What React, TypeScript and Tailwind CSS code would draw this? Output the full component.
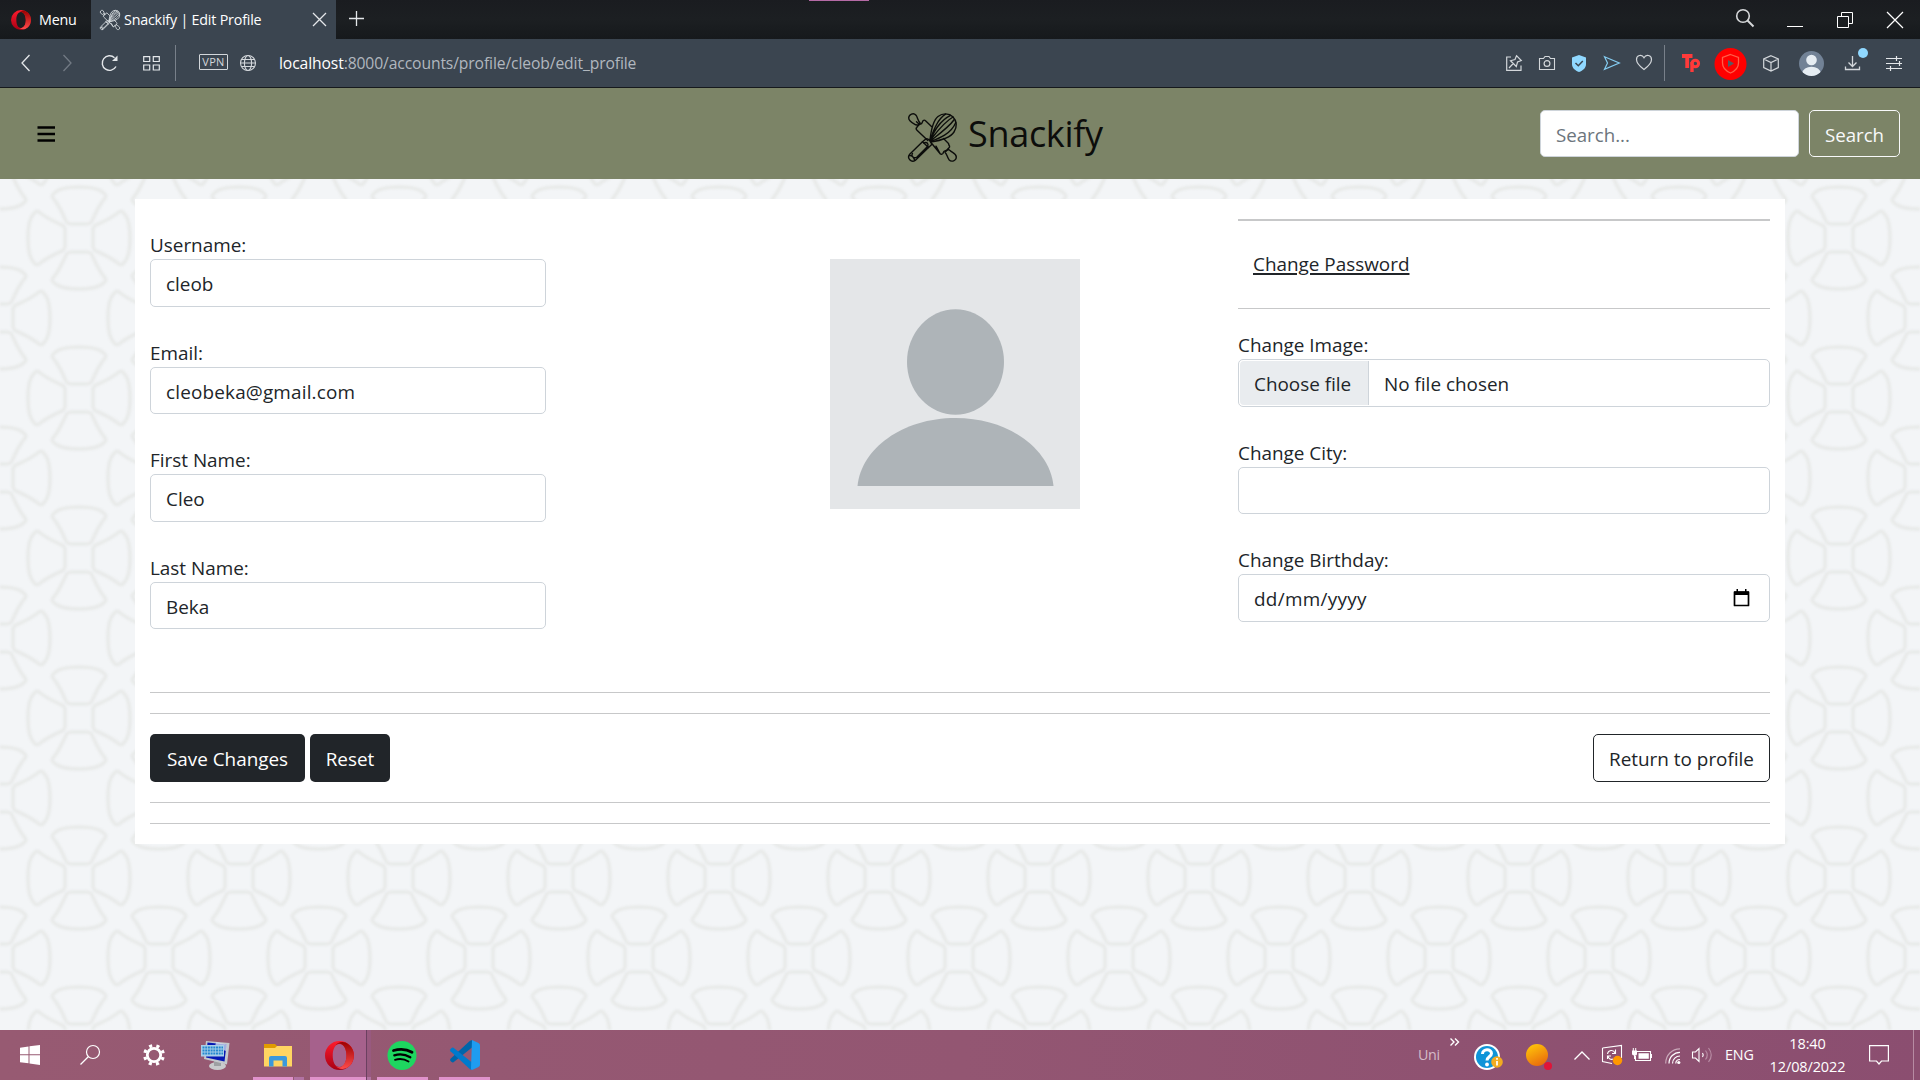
import React from 'react';

const F = 'font-["Open_Sans","Noto_Sans",sans-serif]';

function Icon({ w, h, vb, cls = '', children }: { w: number; h: number; vb?: string; cls?: string; children: React.ReactNode }) {
  return (
    <svg width={w} height={h} viewBox={vb ?? `0 0 ${w} ${h}`} fill="none" className={`shrink-0 overflow-visible ${cls}`}>
      {children}
    </svg>
  );
}

function Utensils({ size, color, sw, cls = '' }: { size: number; color: string; sw: number; cls?: string }) {
  return (
    <Icon w={size} h={size} vb="0 0 49 49" cls={cls}>
      <g stroke={color} strokeWidth={sw} strokeLinejoin="round" strokeLinecap="round">
        <path d="M11.500 11.500 L8.500 8.700 M7.800 11.800 C4.500 10 0.500 8.500 0.700 4.800 C0.900 1.300 5.500 -0.800 8 2.200 C9.800 4.800 9.800 7.500 12 9.800 L10.200 12.200 Z" />
        <path d="M23.500 13.500 L17.500 7.700 C16.800 7 15.600 7.200 15 7.800 L13.700 10.500 L11 11.500 L8.700 14.500 C8 15.200 8.200 16.400 9 17.200 L19.800 27.500" />
        <path d="M28 33.200 L32.200 40.800 C33 41.500 34.200 41.300 34.800 40.600 L36 38.300 L38.800 37.200 L41 34.700 C41.800 34 41.700 32.900 41 32.200 L40.500 30.500 L35.500 25.500 M24 30.800 L32.200 40.800" />
        <path d="M37 39.200 C39.200 41.500 39 44 41 46.700 C43.500 49.500 48.500 47.800 48.300 43.900 C48.200 40.500 44.500 39.800 42 37.500 L40 36.200 Z" />
        <path d="M22 27 C23 18 25 7.500 30 3.500 C34.500 0 41 0 44.800 3.700 C49 7.700 49.300 14 46 19 C42.500 24.500 33 27.500 22.500 29" />
        <path d="M22 27 C25.500 20 31 8 42.500 2.300 M22 27.500 C28 20 36 9 45 4 M22.300 28 C30 22 41 14 46.300 6.500 M22.500 28.500 C31 25.500 43 21 47.800 9.500 M22 27 C26 16 30 6 37.500 1.200" />
        <path d="M17.500 26.200 C19.500 24.500 24 28.500 23.500 31.800 L20.500 34.500 L14.500 28.800 Z" />
        <path d="M14.500 28.800 L1.700 41.200 C-1.500 45 3.200 50 7.200 47.500 L20.500 34.500 M16 30 C19 28.500 21 31 19.500 33.500 L9 44 C6 46 2.500 43 4.500 40.600 M2 42.500 C4 42.500 6.500 45 6.500 47.500" />
      </g>
    </Icon>
  );
}

function OperaO({ w, h, id }: { w: number; h: number; id: string }) {
  return (
    <Icon w={w} h={h} vb="0 0 30 30">
      <defs>
        <linearGradient id={id + 'a'} x1="0" y1="0" x2="0" y2="1">
          <stop offset="0" stopColor="#ff1b2d" />
          <stop offset="1" stopColor="#a70014" />
        </linearGradient>
        <linearGradient id={id + 'b'} x1="0" y1="0" x2="0" y2="1">
          <stop offset="0" stopColor="#9c0000" />
          <stop offset="1" stopColor="#ff4b4b" />
        </linearGradient>
      </defs>
      <path fillRule="evenodd" d="M15 0a15 15 0 1 0 0 30a15 15 0 1 0 0-30zM15 3C20 3 22.200 9 22.200 15S20 27 15 27S8 21 8 15S10 3 15 3z" fill={`url(#${id}a)`} />
      <path d="M11 4.500C13 2.500 15 2.500 16.500 3.200C20.500 5 22.200 10 22.200 15S20.500 25 16.500 26.800C15 27.500 13 27.500 11 25.500C13 28.500 19 31 25 26.200C31.500 21 31.500 9 25 3.800C19-1 13 1.500 11 4.500z" fill={`url(#${id}b)`} />
    </Icon>
  );
}

function Flower({ x, y }: { x: number; y: number }) {
  const petal =
    'M-12.500 16 Q-11 14 -8 14 H8 Q11 14 12.500 16 C16 24 20 33 26 40 Q28 43 24.500 45 C17 53 -17 53 -24.500 45 Q-28 43 -26 40 C-20 33 -16 24 -12.500 16 Z';
  return (
    <g transform={`translate(${x} ${y})`}>
      <path d={petal} />
      <path d={petal} transform="rotate(90)" />
      <path d={petal} transform="rotate(180)" />
      <path d={petal} transform="rotate(270)" />
    </g>
  );
}

function Wallpaper() {
  return (
    <svg className="absolute inset-0 h-full w-full bg-[#f3f5f7]" aria-hidden="true">
      <defs>
        <pattern id="tiles" x="-1" y="70" width="160" height="160" patternUnits="userSpaceOnUse">
          <g stroke="#e8eae9" strokeWidth="3.600" fill="none" strokeLinejoin="round">
            <Flower x={80} y={80} />
            <Flower x={0} y={0} />
            <Flower x={160} y={0} />
            <Flower x={0} y={160} />
            <Flower x={160} y={160} />
          </g>
        </pattern>
      </defs>
      <rect width="100%" height="100%" fill="url(#tiles)" className="blur-[1.2px]" />
    </svg>
  );
}

function TabStrip() {
  return (
    <div className="flex h-[39px] items-center bg-linear-to-b from-[#1a1c20] via-[#1c1f22] to-[#16191c] text-[14.300px] text-white">
      <div className="flex h-full w-[91px] items-center pl-[11px]">
        <OperaO w={20} h={20} id="om" />
        <span className="ml-2 pt-px tracking-[-0.200px]">Menu</span>
      </div>
      <div className="flex h-full w-[245px] items-center bg-[#3b4550] pl-[9px]">
        <Utensils size={20} color="#d5dade" sw={2.2} />
        <span className="ml-1 w-[190px] whitespace-nowrap tracking-[-0.200px]">Snackify | Edit Profile</span>
        <Icon w={13} h={13} cls="mr-[10px]">
          <path d="M0 0L13 13M13 0L0 13" stroke="#e4e7ea" strokeWidth="1.300" />
        </Icon>
      </div>
      <Icon w={15} h={15} cls="ml-[13px] mb-[2px]">
        <path d="M7.500 0V15M0 7.500H15" stroke="#e4e7ea" strokeWidth="1.300" />
      </Icon>
      <div className="h-px w-[60px] self-start bg-[#b56aa5] ml-[445px]" />
      <Icon w={18} h={18} cls="ml-auto mb-[3px]">
        <circle cx="7" cy="7" r="6.300" stroke="#d6d8da" strokeWidth="1.600" />
        <path d="M11.500 11.500L17.500 17.500" stroke="#d6d8da" strokeWidth="1.900" />
      </Icon>
      <Icon w={16} h={16} cls="ml-[33px]">
        <path d="M0 14.500H16" stroke="#fff" strokeWidth="1" />
      </Icon>
      <Icon w={16} h={16} cls="ml-[34px]">
        <path d="M0.500 4.500H11.500V15.500H0.500ZM4.500 4.500V0.500H15.500V11.500H11.500" stroke="#fff" />
      </Icon>
      <Icon w={16} h={16} cls="ml-[34px] mr-[17px]">
        <path d="M0 0L16 16M16 0L0 16" stroke="#fff" strokeWidth="1.200" />
      </Icon>
    </div>
  );
}

function AddressBar() {
  const g = '#d3d7db';
  return (
    <div className="flex h-[49px] items-center border-b border-[#16191c] bg-[#3b4550]">
      <Icon w={9} h={16} cls="ml-[21px]">
        <path d="M8.500 0L1 8L8.500 16" stroke="#e4e7ea" strokeWidth="1.300" />
      </Icon>
      <Icon w={9} h={16} cls="ml-[33px]">
        <path d="M0.500 0L8 8L0.500 16" stroke="#727a84" strokeWidth="1.300" />
      </Icon>
      <Icon w={17} h={16} cls="ml-[29px]">
        <path d="M15 11.500A7.300 7.300 0 1 1 13.500 2.700" stroke="#e4e7ea" strokeWidth="1.400" />
        <path d="M16.500 0.500V6H11Z" fill="#e4e7ea" />
      </Icon>
      <Icon w={17} h={15} cls="ml-[25px]">
        <path d="M0.700 0.700H6.700V5.500H0.700ZM10.300 0.700H16.300V5.500H10.300ZM0.700 9H6.700V14H0.700ZM10.300 9H16.300V14H10.300Z" stroke="#e4e7ea" strokeWidth="1.200" />
      </Icon>
      <div className="ml-[15px] h-9 w-px bg-[#78808a]" />
      <div className="ml-[23px] mb-[2px] flex h-[16px] w-[29px] items-center justify-center rounded-[1px] border border-[#d3d7db] text-[11px] tracking-[0.300px] text-[#d3d7db]">VPN</div>
      <Icon w={16} h={16} cls="ml-[12px] mb-px">
        <g stroke={g} strokeWidth="1.100">
          <circle cx="8" cy="8" r="7.500" />
          <ellipse cx="8" cy="8" rx="3.600" ry="7.500" />
          <path d="M0.500 8H15.500M1.500 4.500H14.500M1.500 11.500H14.500" />
        </g>
      </Icon>
      <div className="ml-[23px] whitespace-nowrap pt-[2px] text-[15.700px] tracking-[-0.120px] text-[#b1b7bf]">
        <span className="text-white">localhost</span>:8000/accounts/profile/cleob/edit_profile
      </div>

      <Icon w={16} h={16} cls="ml-auto mb-px">
        <path d="M5 2H0.700V15.300H15V10.500" stroke={g} strokeWidth="1.200" />
        <path d="M10.500 0.700L15.300 5.500L11.500 7L10.300 11.500L4.500 5.700L9 4.500ZM7.300 8.500L3 13" stroke={g} strokeWidth="1.200" />
      </Icon>
      <Icon w={16} h={14} cls="ml-[17px]">
        <path d="M0.500 2.500H4.500L6 0.500H10L11.500 2.500H15.500V13.500H0.500Z" stroke={g} strokeWidth="1.100" />
        <circle cx="8" cy="7.500" r="2.900" stroke={g} strokeWidth="1.200" />
      </Icon>
      <Icon w={14} h={17} cls="ml-[17px]">
        <path d="M7 0L14 2.500V9C14 13 11 15.500 7 17C3 15.500 0 13 0 9V2.500Z" fill="#90d8ff" />
        <path d="M3.500 8L6.300 10.700L10.800 6" stroke="#3b4550" strokeWidth="1.500" />
      </Icon>
      <Icon w={16} h={14} cls="ml-[18px]">
        <path d="M0.500 0.700L15.300 7L0.500 13.300L3.500 7Z" stroke="#85cdf2" strokeWidth="1.200" />
      </Icon>
      <Icon w={16} h={15} cls="ml-[16px] mb-[2px]">
        <path d="M8 14.500C4 11.500 0.500 8.500 0.500 4.500C0.500 0 6-1 8 2.800C10-1 15.500 0 15.500 4.500C15.500 8.500 12 11.500 8 14.500Z" stroke={g} strokeWidth="1.200" />
      </Icon>
      <div className="ml-[12px] h-9 w-px bg-[#78808a]" />
      <Icon w={18} h={18} cls="ml-[17px]">
        <path d="M0 2H10.500M5.200 2V14" stroke="#ff3a3a" strokeWidth="3.800" />
        <circle cx="13.300" cy="9.500" r="3.300" stroke="#ff3a3a" strokeWidth="3" />
        <path d="M10 8V18" stroke="#ff3a3a" strokeWidth="3.400" />
      </Icon>
      <Icon w={33} h={33} cls="ml-[14px]">
        <circle cx="16.500" cy="17" r="16" fill="#ff0000" />
        <path d="M16.500 7.500L24.500 10.500V16C24.500 21 21 24 16.500 26C12 24 8.500 21 8.500 16V10.500Z" stroke="#ff5e48" strokeWidth="1.300" />
        <path d="M14 13V20L20 16.500Z" fill="#555c66" />
      </Icon>
      <Icon w={16} h={17} cls="ml-[16px]">
        <path d="M8 0.700L15.300 4V12.500L8 16L0.700 12.500V4ZM0.700 4L8 7.500L15.300 4M8 7.500V16" stroke={g} strokeWidth="1.200" />
      </Icon>
      <Icon w={25} h={25} cls="ml-[20px]">
        <clipPath id="ava"><circle cx="12.500" cy="12.500" r="12.500" /></clipPath>
        <circle cx="12.500" cy="12.500" r="12.500" fill="#728296" />
        <g clipPath="url(#ava)" fill="#e6edf3">
          <circle cx="12.500" cy="9" r="5.300" />
          <ellipse cx="12.500" cy="22" rx="9" ry="6.200" />
        </g>
      </Icon>
      <Icon w={15} h={15} cls="ml-[21px]">
        <path d="M7.500 0V10.500M3.500 6.500L7.500 10.500L11.500 6.500M0.500 10.500V13.500H14.500V10.500" stroke={g} strokeWidth="1.300" />
        <circle cx="18" cy="-3" r="5" fill="#90d8ff" />
      </Icon>
      <Icon w={16} h={15} cls="ml-[26px] mr-[18px]">
        <path d="M0 2.500H16M0 7.500H16M0 12.500H16M10.500 0V5M13.500 5V10M4.500 10V15" stroke="#e4e7ea" strokeWidth="1.200" />
      </Icon>
    </div>
  );
}

function Header() {
  return (
    <header className="relative flex h-[91px] items-center bg-[#7c8467] pr-5">
      <Icon w={18} h={16} cls="ml-[37px]">
        <path d="M0.500 1.500H18M0.500 8H18M0.500 14.500H18" stroke="#000" strokeWidth="2.600" />
      </Icon>
      <div className="ml-[853px] flex items-center">
        <Utensils size={49} color="#0c0d0b" sw={1.400} cls="mt-[7px]" />
        <span className="ml-[11px] mt-[1px] text-[36px] leading-[46px] tracking-[-0.300px] text-[#0c0d0b]">Snackify</span>
      </div>
      <div className="ml-auto flex gap-[10px]">
        <div className="h-[47px] w-[259px] rounded-[5px] border border-[#ced4da] bg-white pt-[10px] pl-[15px] text-[18.700px] leading-[28px] text-[#6c757d]">Search...</div>
        <div className="flex h-[47px] w-[91px] justify-center rounded-[5px] border border-[#f8f9fa] pt-[10px] text-[18.700px] leading-[28px] text-[#f8f9fa]">Search</div>
      </div>
    </header>
  );
}

const box = 'flex h-[47.600px] rounded-[5px] border border-[#ced4da] bg-white';
const val = 'pl-[15px] pt-[9px]';

function Field({ label, children }: { label: string; children?: React.ReactNode }) {
  return (
    <div className="h-[107.500px]">
      <div className="h-[30px] pt-[1px]">{label}</div>
      <div className={box}>{children}</div>
    </div>
  );
}

function Profile() {
  return (
    <main className="relative mx-[135px] mt-5 h-[645px] bg-white px-[15px] text-[18.900px] leading-[30px] text-[#212529]">
      <div className="flex h-[493px]">
        <div className="w-[396px] pt-[30px]">
          <Field label="Username:"><span className={val}>cleob</span></Field>
          <Field label="Email:"><span className={`${val} tracking-[0.180px]`}>cleobeka@gmail.com</span></Field>
          <Field label="First Name:"><span className={val}>Cleo</span></Field>
          <Field label="Last Name:"><span className={val}>Beka</span></Field>
        </div>
        <div className="ml-[284px] mt-[60px] h-[250px] w-[250px]">
          <Icon w={250} h={250}>
            <rect width="250" height="250" fill="#e4e6e8" />
            <ellipse cx="125.500" cy="103" rx="48.500" ry="52.800" fill="#aeb4b8" />
            <path d="M27.500 227C31 190 72 159 125.500 159S220 190 223.500 227Z" fill="#aeb4b8" />
          </Icon>
        </div>
        <div className="ml-auto w-[532px] pt-5">
          <div className="h-[2px] bg-[#c7c8c9]" />
          <div className="h-[87px] pt-[28px] pl-[15px]">
            <span className="underline decoration-[1.500px] underline-offset-[2px]">Change Password</span>
          </div>
          <div className="mb-5 h-px bg-[#c7c8c9]" />
          <Field label="Change Image:">
            <span className="m-px w-[129px] rounded-l-[4px] border-r border-[#ced4da] bg-[#e9ecef] pl-[14px] pt-[8px]">Choose file</span>
            <span className="pl-[14px] pt-[9px]">No file chosen</span>
          </Field>
          <Field label="Change City:" />
          <Field label="Change Birthday:">
            <span className={`${val} tracking-[0.300px]`}>dd/mm/yyyy</span>
            <Icon w={17} h={18} cls="ml-auto mr-[19px] mt-[14px]">
              <path d="M1.500 3H15.500V16.500H1.500Z" stroke="#000" strokeWidth="1.700" strokeLinejoin="round" />
              <path d="M1 2.500H16V6H1ZM3.500 0H5V3H3.500ZM12 0H13.500V3H12Z" fill="#000" />
            </Icon>
          </Field>
        </div>
      </div>
      <div className="h-px bg-[#c7c8c9]" />
      <div className="mt-5 h-px bg-[#c7c8c9]" />
      <div className="mt-5 flex h-[48px]">
        <div className="w-[155px] rounded-[5px] bg-[#212529] pt-[9.500px] text-center text-white">Save Changes</div>
        <div className="ml-[5px] w-[80px] rounded-[5px] bg-[#212529] pt-[9.500px] text-center text-white">Reset</div>
        <div className="ml-auto w-[177px] rounded-[5px] border border-[#212529] pt-[8.500px] text-center">Return to profile</div>
      </div>
      <div className="mt-5 h-px bg-[#c7c8c9]" />
      <div className="mt-5 h-px bg-[#c7c8c9]" />
    </main>
  );
}

function Taskbar() {
  const slot = 'flex h-full shrink-0 items-center justify-center';
  return (
    <footer className="flex h-[50px] bg-linear-to-r from-[#975a72] via-[#935672] to-[#8b4e70] text-white">
      <div className={`${slot} w-[60px]`}>
        <Icon w={20} h={20}>
          <path d="M0 2.700L8.500 1.500V9.300H0ZM9.500 1.300L20 0V9.300H9.500ZM0 10.300H8.500V18.300L0 17.200ZM9.500 10.300H20V20L9.500 18.500Z" fill="#fff" />
        </Icon>
      </div>
      <div className={`${slot} w-[60px]`}>
        <Icon w={20} h={20}>
          <circle cx="13" cy="7" r="6.500" stroke="#fff" strokeWidth="1.200" />
          <path d="M8.500 11.500L0.500 19.500" stroke="#fff" strokeWidth="1.300" />
        </Icon>
      </div>
      <div className={`${slot} w-[67px]`}>
        <Icon w={22} h={22}>
          <circle cx="11" cy="11" r="6.700" stroke="#fff" strokeWidth="2.800" />
          <circle cx="11" cy="11" r="9.300" stroke="#fff" strokeWidth="3.200" strokeDasharray="3.100 4.204" strokeDashoffset="-2.100" />
        </Icon>
      </div>
      <div className={`${slot} w-[57px]`}>
        <Icon w={29} h={29}>
          <ellipse cx="16.500" cy="25" rx="8.500" ry="4" fill="#c9cbcd" />
          <path d="M13 19H20V25H13Z" fill="#9da0a3" />
          <path d="M5 0L28.500 2L26 23.500L3 18Z" fill="#c4c8cc" />
          <path d="M6.500 1.500L25.500 3.500L23.500 20.500L5 16.500Z" fill="#0618b4" />
          <path d="M15 1L26 3.500L25 10L14 6Z" fill="#d7dfef" opacity="0.750" />
          <path d="M0 4H23V15.500H0Z" fill="#a9cfe8" />
          <path d="M1.500 6.500H22M1.500 9.500H22M1.500 12.500H22" stroke="#2588cf" strokeWidth="2" strokeDasharray="2 0.700" />
        </Icon>
      </div>
      <div className={`${slot} relative ml-[4px] w-[60px]`}>
        <Icon w={28} h={23}>
          <path d="M0 0H11L13 2V5H0Z" fill="#e09b00" />
          <path d="M0 4H11L13 2H28V22.500H0Z" fill="#ffd562" />
          <path d="M5 22.500V14Q5 12 7 12H21Q23 12 23 14V22.500H18.500V16.500H9.500V22.500Z" fill="#3b99dc" />
        </Icon>
        <div className="absolute bottom-0 left-[5px] flex h-[3px] w-[51px] gap-px"><div className="w-[40px] bg-[#e092cb]" /><div className="w-[10px] bg-[#b273a3]" /></div>
      </div>
      <div className={`${slot} ml-[2px] w-[56px] border-b-3 border-[#e092cb] bg-[#a6618c]`}>
        <div className="pt-[3px] pl-[3px]"><OperaO w={29} h={29} id="ot" /></div>
      </div>
      <div className="ml-px flex w-[4px] items-end bg-[#98597f] shadow-[-1px_0_0_#6b4060]"><div className="h-[3px] w-full bg-[#b273a3]" /></div>
      <div className={`${slot} ml-[6px] w-[51px] border-b-3 border-[#e092cb] pt-[3px]`}>
        <Icon w={29} h={29}>
          <circle cx="14" cy="14.500" r="14.500" fill="#1ed760" />
          <g stroke="#000" strokeLinecap="round">
            <path d="M5.500 9.500C11.500 7.700 19 8.300 24 11.300" strokeWidth="2.800" />
            <path d="M6.300 14.300C11.500 12.800 17.500 13.400 22.300 16.200" strokeWidth="2.300" />
            <path d="M7 18.800C11.500 17.500 16.500 18 20.500 20.500" strokeWidth="1.900" />
          </g>
        </Icon>
      </div>
      <div className={`${slot} ml-[11px] w-[51px] border-b-3 border-[#e092cb] pt-[3px]`}>
        <Icon w={30} h={30}>
          <path d="M22 7.500L3.500 22.200Q2.500 22.700 1.600 22L0.400 20.700Q-0.300 19.700 0.500 18.800L20 0.700L22.500 0Z" fill="#0065a9" />
          <path d="M22 22.500L3.500 7.800Q2.500 7.300 1.600 8L0.400 9.300Q-0.300 10.300 0.500 11.200L20 29.300L22.500 30Z" fill="#007acc" />
          <path d="M22 0L28.500 3Q30 3.700 30 5.300V24.700Q30 26.300 28.500 27L22 30Q20.500 29.700 21 28Z" fill="#1f9cf0" />
        </Icon>
      </div>

      <div className="ml-[928px] flex items-center">
        <span className="w-[22px] text-[14.300px] tracking-[-0.300px] text-[#d4bbc8]">Uni</span>
        <Icon w={9} h={8} cls="ml-[10px] mb-[26px]">
          <path d="M0.500 0.500L4 4L0.500 7.500M5 0.500L8.500 4L5 7.500" stroke="#fff" strokeWidth="1.400" />
        </Icon>
        <Icon w={28} h={28} cls="ml-[15px] mt-[3px]">
          <circle cx="13" cy="14" r="13" fill="#fff" />
          <circle cx="13" cy="14" r="11" fill="#0f94d8" />
          <path d="M8.500 11C8.500 5.500 17.500 5.500 17.500 10.500C17.500 13.500 13 13.500 13 17.500" stroke="#fff" strokeWidth="3" />
          <circle cx="13" cy="21.500" r="1.900" fill="#fff" />
          <circle cx="23" cy="19" r="5.800" fill="#f2ab20" />
          <path d="M23 18V22.500M23 15V16.700" stroke="#fff" strokeWidth="1.700" />
        </Icon>
        <Icon w={26} h={26} cls="ml-[24px] mt-[3px]">
          <defs>
            <linearGradient id="sun" x1="0.200" y1="0" x2="0.700" y2="1">
              <stop offset="0" stopColor="#ffc60a" />
              <stop offset="1" stopColor="#e9690c" />
            </linearGradient>
          </defs>
          <circle cx="11" cy="11" r="11" fill="url(#sun)" />
          <circle cx="22" cy="22" r="4" fill="#e01438" />
        </Icon>
        <Icon w={16} h={9} cls="ml-[22px]">
          <path d="M0.500 8.500L8 1L15.500 8.500" stroke="#fff" strokeWidth="1.300" />
        </Icon>
        <Icon w={20} h={20} cls="ml-[12px]">
          <path d="M0.500 3L19.500 0.500V13M0.500 3V16.500L10 18.500" stroke="#fff" strokeWidth="1.100" />
          <path d="M5.500 9C6 5 11.500 4 13 8M13.500 4.500V8.500H10M5.500 14V11H9M6 11C6.500 14 9 15 11 14" stroke="#fff" strokeWidth="1.100" />
          <circle cx="15.500" cy="15.500" r="4.700" fill="#ff9800" />
        </Icon>
        <Icon w={20} h={14} cls="ml-[10px]">
          <path d="M5 3.500H18.500V12.500H3.500V8" stroke="#fff" strokeWidth="1.100" />
          <path d="M6.500 5.200H16.800V10.800H6.500ZM18.500 6H20V10H18.500ZM0 2.500H5V6Q5 7.500 3.300 7.500V11H2V7.500Q0 7 0 6ZM0.800 0H1.800V2.500H0.800ZM3.200 0H4.200V2.500H3.200Z" fill="#fff" />
        </Icon>
        <Icon w={15} h={16} cls="ml-[13px] mt-[2px]">
          <path d="M0.700 15.500C0.700 7 7 0.800 15 0.800" stroke="#c9a8b9" strokeWidth="1.200" />
          <path d="M4 15.500C4 9 9 4.300 15 4.300M7.500 15.500C7.500 11 11 8 15 8M10.800 15.500C10.800 13 12.500 11.500 15 11.500" stroke="#fff" strokeWidth="1.200" />
          <circle cx="13.800" cy="14.500" r="1.600" fill="#fff" />
        </Icon>
        <Icon w={21} h={16} cls="ml-[12px]">
          <path d="M0.500 5H3.500L7 1.500V14.500L3.500 11H0.500Z" stroke="#fff" strokeWidth="1.100" />
          <path d="M10.500 6Q12 8 10.500 10" stroke="#fff" strokeWidth="1.200" />
          <path d="M13.500 3.500Q17 8 13.500 12.500M16.500 1Q22 8 16.500 15" stroke="#b78ba3" strokeWidth="1.200" />
        </Icon>
        <span className="ml-[12px] w-[28px] text-[14.300px] tracking-[-0.100px]">ENG</span>
        <div className="ml-[15px] flex w-[79px] flex-col items-center whitespace-nowrap text-[14.500px] leading-[23px] tracking-[-0.120px]">
          <div>18:40</div>
          <div>12/08/2022</div>
        </div>
        <Icon w={20} h={20} cls="ml-[22px]">
          <path d="M0.600 0.600H19.400V16H12.500L10 19L7.500 16H0.600Z" stroke="#fff" strokeWidth="1.200" />
        </Icon>
        <div className="ml-[24px] h-[50px] w-px bg-[#b78ba3]" />
      </div>
    </footer>
  );
}

export default function App() {
  return (
    <div className={`flex h-[1080px] w-[1920px] flex-col overflow-hidden ${F}`}>
      <TabStrip />
      <AddressBar />
      <div className="relative h-[942px]">
        <Wallpaper />
        <Header />
        <Profile />
      </div>
      <Taskbar />
    </div>
  );
}
